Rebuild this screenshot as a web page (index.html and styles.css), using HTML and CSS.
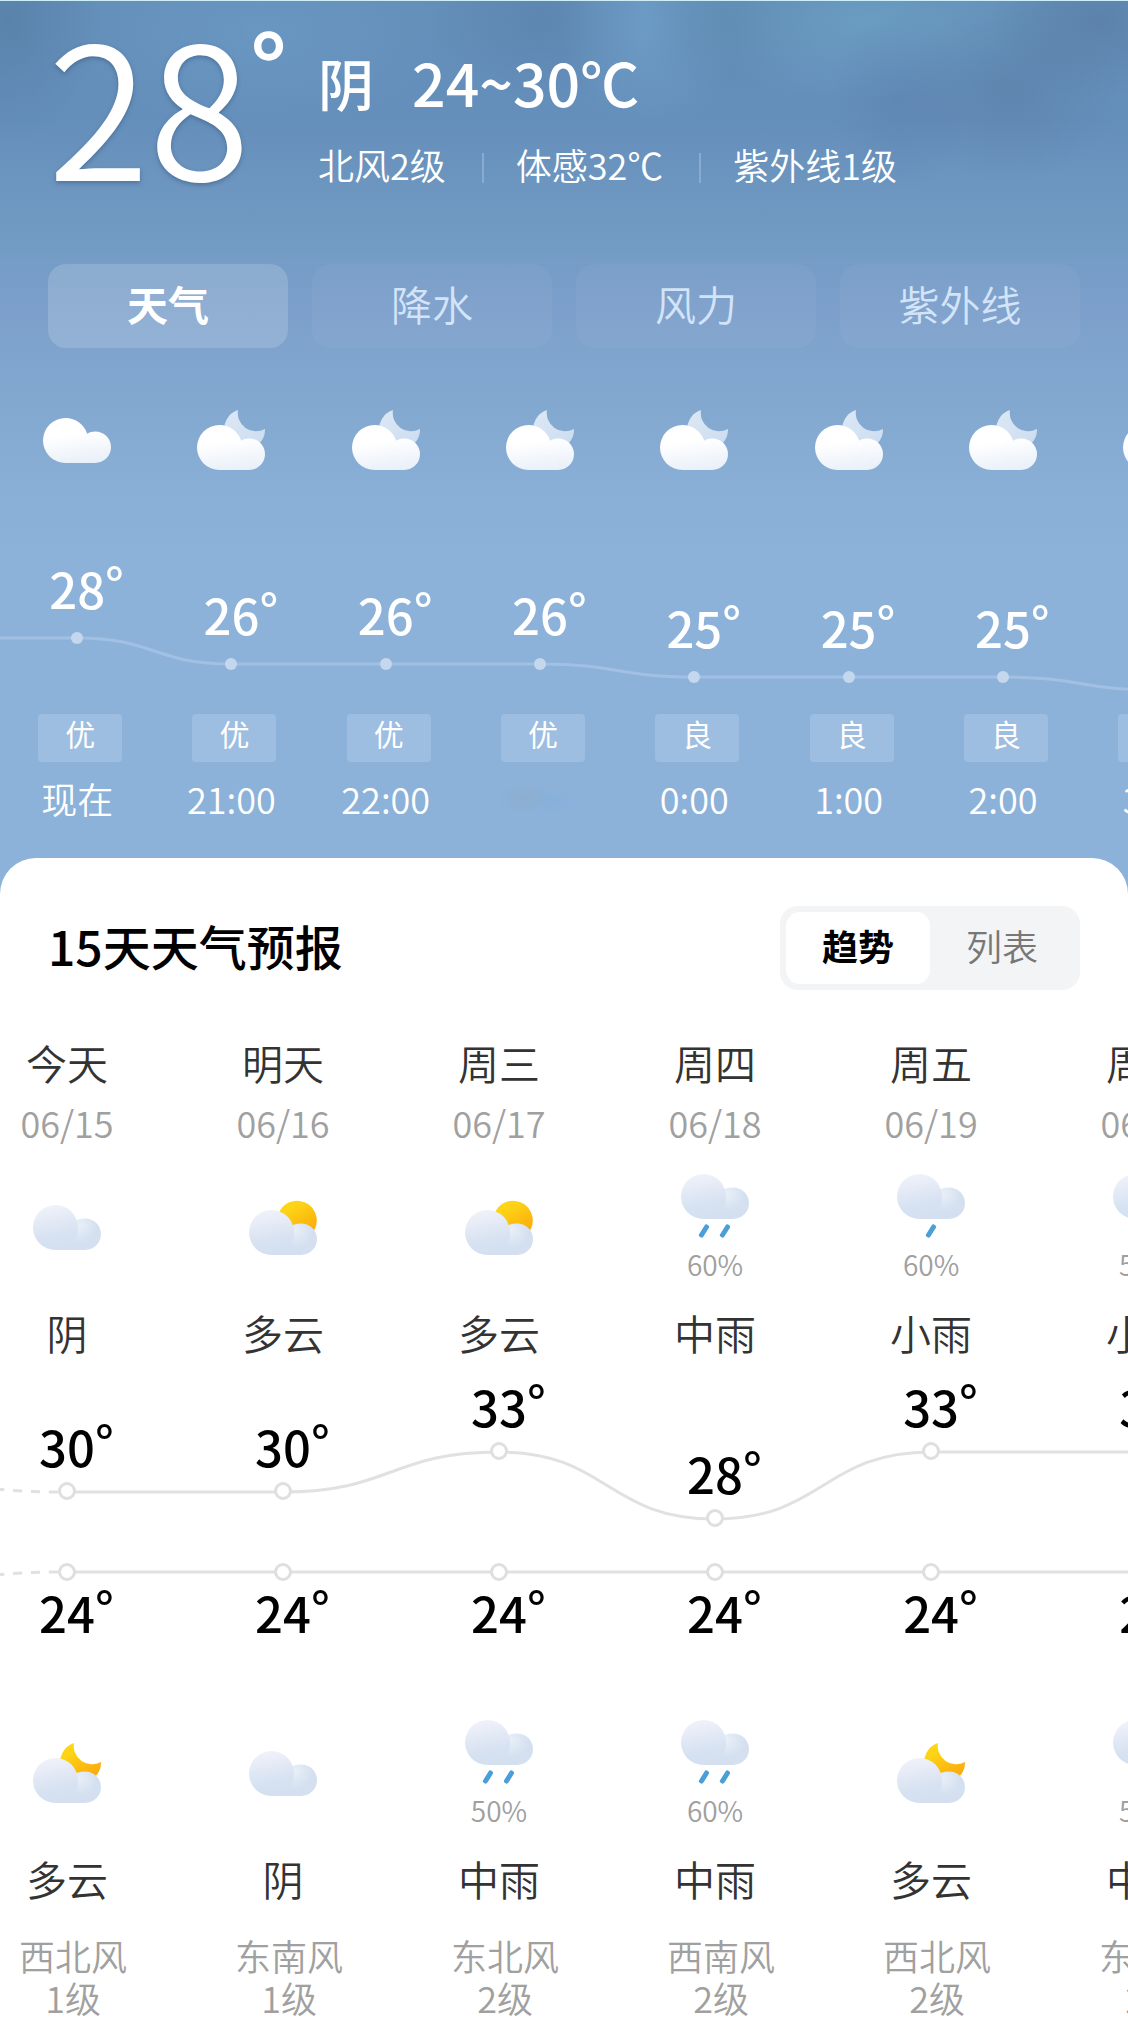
FILE: index.html
```
<!DOCTYPE html>
<html lang="zh-CN">
<head>
  <meta charset="UTF-8">
  <meta name="viewport" content="width=device-width, initial-scale=1">
  <title>天气预报</title>
  <link rel="stylesheet" href="styles.css">
</head>
<body>

  <!-- Icon set -->
  <svg class="icon-defs" width="0" height="0" aria-hidden="true">
    <defs>
      <linearGradient id="white-cloud" x1="0.4" y1="0" x2="0.6" y2="1">
        <stop offset="0.35" stop-color="#ffffff"/>
        <stop offset="1" stop-color="#e9f0f9"/>
      </linearGradient>
      <linearGradient id="pale-moon" x1="0" y1="0" x2="1" y2="1">
        <stop offset="0" stop-color="#dce8f5"/>
        <stop offset="1" stop-color="#cbdcf0"/>
      </linearGradient>
      <linearGradient id="big-puff" x1="0.4" y1="0" x2="0.6" y2="1">
        <stop offset="0" stop-color="#f0f2fa"/>
        <stop offset="0.7" stop-color="#d6e1f1"/>
        <stop offset="1" stop-color="#d4e0f0"/>
      </linearGradient>
      <radialGradient id="small-puff" gradientUnits="userSpaceOnUse" cx="46" cy="20" r="18">
        <stop offset="0" stop-color="#e8eff8"/>
        <stop offset="1" stop-color="#d4e0f0"/>
      </radialGradient>
      <linearGradient id="gold" x1="0.2" y1="0" x2="0.8" y2="1">
        <stop offset="0.2" stop-color="#fdd416"/>
        <stop offset="0.9" stop-color="#fba90c"/>
      </linearGradient>
      <g id="cloud-white">
        <path fill="url(#white-cloud)" d="M22.5 0C32.5 0 41.5 6.5 44.2 15.8C46.5 14.2 49.2 13.4 52.2 13.4A15.8 15.8 0 0 1 52.2 45H22.5A22.5 22.5 0 0 1 22.5 0Z"/>
      </g>
      <g id="cloud-blue">
        <path fill="url(#small-puff)" d="M22 45V30L40 17C43 14.8 47 13.4 52.2 13.4A15.8 15.8 0 0 1 52.2 45Z"/>
        <path fill="url(#big-puff)" d="M22.5 0A22.5 22.5 0 0 1 45 22.5C45 34 38 45 31 45H22.5A22.5 22.5 0 0 1 22.5 0Z"/>
      </g>
      <path id="moon" d="M41-15A20.5 20.5 0 1 0 68 4A18.3 18.3 0 0 1 41-15Z"/>
      <path id="drop" d="M25.5 53L20.5 61" stroke="#4a9fd8" stroke-width="5" stroke-linecap="round"/>
    </defs>
    <symbol id="overcast-white" viewBox="0 0 68 45"><use href="#cloud-white"/></symbol>
    <symbol id="cloudy-night-white" viewBox="0 -15 68 60">
      <use href="#moon" fill="url(#pale-moon)"/>
      <use href="#cloud-white"/>
    </symbol>
    <symbol id="overcast" viewBox="0 0 68 45"><use href="#cloud-blue"/></symbol>
    <symbol id="cloudy-day" viewBox="0 -10 68 55">
      <circle cx="48" cy="10.5" r="19.8" fill="url(#gold)"/>
      <use href="#cloud-blue"/>
    </symbol>
    <symbol id="cloudy-night" viewBox="0 -15 68 60">
      <use href="#moon" fill="url(#gold)"/>
      <use href="#cloud-blue"/>
    </symbol>
    <symbol id="light-rain" viewBox="0 0 68 64">
      <use href="#cloud-blue"/>
      <use href="#drop" x="11"/>
    </symbol>
    <symbol id="rain" viewBox="0 0 68 64">
      <use href="#cloud-blue"/>
      <use href="#drop"/>
      <use href="#drop" x="21"/>
    </symbol>
  </svg>

  <main class="page">

    <header class="now">
      <div class="now-temp">28<span class="now-deg">°</span></div>
      <div class="now-info">
        <h1 class="now-title"><span>阴</span><span class="now-range">24~30℃</span></h1>
        <ul class="now-details">
          <li>北风2级</li>
          <li>体感32℃</li>
          <li>紫外线1级</li>
        </ul>
      </div>
    </header>

    <nav class="tabs">
      <button type="button" class="tab active">天气</button>
      <button type="button" class="tab">降水</button>
      <button type="button" class="tab">风力</button>
      <button type="button" class="tab">紫外线</button>
    </nav>

    <!-- Hourly forecast -->
    <section class="hourly">
      <svg class="hourly-line" viewBox="0 0 1232 226" preserveAspectRatio="none" aria-hidden="true">
        <path d="M0 150H77C154 150 154 176 231 176H539C616 176 616 189 693 189H1001C1078 189 1078 202 1155 202"/>
      </svg>
      <ol class="hours">
        <li class="hour">
          <div class="hour-icon"><svg class="icon icon-cloud"><use href="#overcast-white"/></svg></div>
          <div class="hour-chart" style="--drop: 0px"><span class="temp">28<span class="deg">°</span></span><i class="hour-dot"></i></div>
          <span class="air">优</span>
          <time class="hour-time">现在</time>
        </li>
        <li class="hour">
          <div class="hour-icon"><svg class="icon icon-night"><use href="#cloudy-night-white"/></svg></div>
          <div class="hour-chart" style="--drop: 26px"><span class="temp">26<span class="deg">°</span></span><i class="hour-dot"></i></div>
          <span class="air">优</span>
          <time class="hour-time">21:00</time>
        </li>
        <li class="hour">
          <div class="hour-icon"><svg class="icon icon-night"><use href="#cloudy-night-white"/></svg></div>
          <div class="hour-chart" style="--drop: 26px"><span class="temp">26<span class="deg">°</span></span><i class="hour-dot"></i></div>
          <span class="air">优</span>
          <time class="hour-time">22:00</time>
        </li>
        <li class="hour">
          <div class="hour-icon"><svg class="icon icon-night"><use href="#cloudy-night-white"/></svg></div>
          <div class="hour-chart" style="--drop: 26px"><span class="temp">26<span class="deg">°</span></span><i class="hour-dot"></i></div>
          <span class="air">优</span>
          <span class="hour-time hour-smudge"></span>
        </li>
        <li class="hour">
          <div class="hour-icon"><svg class="icon icon-night"><use href="#cloudy-night-white"/></svg></div>
          <div class="hour-chart" style="--drop: 39px"><span class="temp">25<span class="deg">°</span></span><i class="hour-dot"></i></div>
          <span class="air">良</span>
          <time class="hour-time">0:00</time>
        </li>
        <li class="hour">
          <div class="hour-icon"><svg class="icon icon-night"><use href="#cloudy-night-white"/></svg></div>
          <div class="hour-chart" style="--drop: 39px"><span class="temp">25<span class="deg">°</span></span><i class="hour-dot"></i></div>
          <span class="air">良</span>
          <time class="hour-time">1:00</time>
        </li>
        <li class="hour">
          <div class="hour-icon"><svg class="icon icon-night"><use href="#cloudy-night-white"/></svg></div>
          <div class="hour-chart" style="--drop: 39px"><span class="temp">25<span class="deg">°</span></span><i class="hour-dot"></i></div>
          <span class="air">良</span>
          <time class="hour-time">2:00</time>
        </li>
        <li class="hour">
          <div class="hour-icon"><svg class="icon icon-night"><use href="#cloudy-night-white"/></svg></div>
          <div class="hour-chart" style="--drop: 52px"><span class="temp">24<span class="deg">°</span></span><i class="hour-dot"></i></div>
          <span class="air">良</span>
          <time class="hour-time">3:00</time>
        </li>
      </ol>
    </section>

    <!-- 15 day forecast -->
    <section class="card">
      <div class="card-head">
        <h2 class="card-title">15天天气预报</h2>
        <div class="switch">
          <button type="button" class="switch-btn active">趋势</button>
          <button type="button" class="switch-btn">列表</button>
        </div>
      </div>

      <div class="daily">
        <svg class="daily-line" viewBox="0 0 1296 276" preserveAspectRatio="none" aria-hidden="true">
          <path class="dashed" d="M99 132C76 132 60 131 36 129"/>
          <path d="M108 132H324C432 132 432 92 540 92S648 159 756 159S864 92 972 92H1296"/>
          <path class="dashed" d="M99 212C76 212 60 213 36 215"/>
          <path d="M108 212H1296"/>
        </svg>
        <ol class="days">
          <li class="day">
            <span class="day-name">今天</span>
            <time class="day-date">06/15</time>
            <div class="sky"><svg class="icon icon-cloud"><use href="#overcast"/></svg></div>
            <span class="sky-text">阴</span>
            <div class="day-chart" style="--drop: 40px">
              <span class="temp">30<span class="deg">°</span></span><i class="day-dot"></i>
              <i class="day-dot low"></i><span class="temp">24<span class="deg">°</span></span>
            </div>
            <div class="sky"><svg class="icon icon-night"><use href="#cloudy-night"/></svg></div>
            <span class="sky-text">多云</span>
            <span class="wind">西北风<br>1级</span>
          </li>
          <li class="day">
            <span class="day-name">明天</span>
            <time class="day-date">06/16</time>
            <div class="sky"><svg class="icon icon-day"><use href="#cloudy-day"/></svg></div>
            <span class="sky-text">多云</span>
            <div class="day-chart" style="--drop: 40px">
              <span class="temp">30<span class="deg">°</span></span><i class="day-dot"></i>
              <i class="day-dot low"></i><span class="temp">24<span class="deg">°</span></span>
            </div>
            <div class="sky"><svg class="icon icon-cloud"><use href="#overcast"/></svg></div>
            <span class="sky-text">阴</span>
            <span class="wind">东南风<br>1级</span>
          </li>
          <li class="day">
            <span class="day-name">周三</span>
            <time class="day-date">06/17</time>
            <div class="sky"><svg class="icon icon-day"><use href="#cloudy-day"/></svg></div>
            <span class="sky-text">多云</span>
            <div class="day-chart" style="--drop: 0px">
              <span class="temp">33<span class="deg">°</span></span><i class="day-dot"></i>
              <i class="day-dot low"></i><span class="temp">24<span class="deg">°</span></span>
            </div>
            <div class="sky"><svg class="icon icon-rain"><use href="#rain"/></svg><span class="chance">50%</span></div>
            <span class="sky-text">中雨</span>
            <span class="wind">东北风<br>2级</span>
          </li>
          <li class="day">
            <span class="day-name">周四</span>
            <time class="day-date">06/18</time>
            <div class="sky"><svg class="icon icon-rain"><use href="#rain"/></svg><span class="chance">60%</span></div>
            <span class="sky-text">中雨</span>
            <div class="day-chart" style="--drop: 67px">
              <span class="temp">28<span class="deg">°</span></span><i class="day-dot"></i>
              <i class="day-dot low"></i><span class="temp">24<span class="deg">°</span></span>
            </div>
            <div class="sky"><svg class="icon icon-rain"><use href="#rain"/></svg><span class="chance">60%</span></div>
            <span class="sky-text">中雨</span>
            <span class="wind">西南风<br>2级</span>
          </li>
          <li class="day">
            <span class="day-name">周五</span>
            <time class="day-date">06/19</time>
            <div class="sky"><svg class="icon icon-rain"><use href="#light-rain"/></svg><span class="chance">60%</span></div>
            <span class="sky-text">小雨</span>
            <div class="day-chart" style="--drop: 0px">
              <span class="temp">33<span class="deg">°</span></span><i class="day-dot"></i>
              <i class="day-dot low"></i><span class="temp">24<span class="deg">°</span></span>
            </div>
            <div class="sky"><svg class="icon icon-night"><use href="#cloudy-night"/></svg></div>
            <span class="sky-text">多云</span>
            <span class="wind">西北风<br>2级</span>
          </li>
          <li class="day">
            <span class="day-name">周六</span>
            <time class="day-date">06/20</time>
            <div class="sky"><svg class="icon icon-rain"><use href="#light-rain"/></svg><span class="chance">50%</span></div>
            <span class="sky-text">小雨</span>
            <div class="day-chart" style="--drop: 0px">
              <span class="temp">33<span class="deg">°</span></span><i class="day-dot"></i>
              <i class="day-dot low"></i><span class="temp">24<span class="deg">°</span></span>
            </div>
            <div class="sky"><svg class="icon icon-rain"><use href="#rain"/></svg><span class="chance">50%</span></div>
            <span class="sky-text">中雨</span>
            <span class="wind">东北风<br>2级</span>
          </li>
        </ol>
      </div>
    </section>

  </main>

</body>
</html>
```
FILE: styles.css
```
* {
  box-sizing: border-box;
}

body {
  margin: 0;
  font-family: "Noto Sans CJK SC", "Noto Sans", sans-serif;
  font-weight: 350;
  color: #fff;
  background: #fff;
}

h1, h2, ol, ul {
  margin: 0;
  padding: 0;
  list-style: none;
}

h1, h2 {
  font-weight: 500;
}

button {
  border: 0;
  padding: 0;
  font-family: inherit;
  font-weight: 350;
  background: none;
  cursor: pointer;
}

.icon-defs {
  position: absolute;
}

.page {
  overflow: hidden;
  border-top: 1px solid #cdeef6;
  /* cloudy sky at the top, plain blue below */
  background:
    radial-gradient(ellipse 110px 90px at 1010px 90px, rgba(84, 118, 156, 0.4), transparent),
    radial-gradient(ellipse 110px 80px at 1100px 20px, rgba(84, 118, 156, 0.5), transparent),
    radial-gradient(ellipse 70px 90px at 900px 100px, rgba(88, 122, 168, 0.35), transparent),
    radial-gradient(ellipse 190px 80px at 870px 20px, rgba(112, 168, 200, 0.5), transparent),
    radial-gradient(ellipse 90px 80px at 730px 20px, rgba(88, 132, 168, 0.5), transparent),
    radial-gradient(ellipse 90px 110px at 650px 20px, rgba(114, 164, 206, 0.6), transparent),
    radial-gradient(ellipse 110px 80px at 540px 20px, rgba(86, 124, 166, 0.5), transparent),
    radial-gradient(ellipse 180px 100px at 260px 30px, rgba(110, 158, 202, 0.5), transparent),
    radial-gradient(ellipse 90px 120px at 10px 20px, rgba(80, 118, 158, 0.5), transparent),
    linear-gradient(#648fb9 0, #658fbb 120px, #6f98c1 210px, #739cc5 250px, #7b9fca 300px, #83a8d0 400px, #8aafd7 490px, #8cb2d9 560px);
}

/* Current weather */
.now {
  display: flex;
  gap: 68px;
  height: 263px;
  padding: 20px 48px 0;
}

.now-temp {
  font-size: 184px;
  font-weight: 350;
  line-height: 160px;
  text-shadow: 0 2px 4px rgba(50, 80, 120, 0.5);
  white-space: nowrap;
}

.now-deg {
  display: inline-block;
  width: 0;
  font-size: 92px;
  font-weight: 700;
  line-height: 40px;
  vertical-align: 78px;
  text-shadow: none;
}

.now-info {
  padding-top: 21px;
}

.now-title {
  display: flex;
  gap: 38px;
  font-size: 56px;
  line-height: 80px;
}

.now-range {
  font-size: 59px;
}

.now-details {
  display: flex;
  margin-top: 18px;
  font-size: 36px;
  line-height: 48px;
}

.now-details li + li::before {
  content: "";
  display: inline-block;
  width: 2px;
  height: 30px;
  margin: 0 32px 0 36px;
  vertical-align: -3px;
  background: #88abd0;
}

/* Tabs */
.tabs {
  display: grid;
  grid-template-columns: repeat(4, 1fr);
  gap: 24px;
  padding: 0 48px;
}

.tab {
  height: 84px;
  padding-bottom: 6px;
  border-radius: 18px;
  font-size: 41px;
  color: #d3e4f8;
  background: rgba(255, 255, 255, 0.04);
}

.tab.active {
  font-weight: 700;
  color: #fff;
  background: rgba(255, 255, 255, 0.16);
}

/* Shared bits */
.icon {
  display: block;
  flex: none;
  width: 68px;
}

.icon-cloud { height: 45px; }
.icon-day { height: 55px; }
.icon-night { height: 60px; }
.icon-rain { height: 64px; }

.temp {
  font-size: 49px;
  font-weight: 500;
  line-height: 56px;
}

/* takes no width, so the digits stay centred */
.deg {
  display: inline-block;
  width: 0;
  line-height: 40px;
  vertical-align: 5px;
}

/* Hourly forecast */
.hourly {
  position: relative;
  padding: 44px 0 36px;
}

.hourly-line {
  position: absolute;
  top: 140px;
  left: 0;
  width: 109.44%;
  height: 226px;
  fill: none;
  stroke: #a1c0e4;
  stroke-width: 3;
}

.hours {
  position: relative;
  display: grid;
  grid-auto-flow: column;
  grid-auto-columns: 13.68%;
}

.hour {
  display: flex;
  flex-direction: column;
  align-items: center;
}

.hour-icon {
  display: flex;
  align-items: center;
  height: 96px;
}

.hour-chart {
  display: flex;
  flex-direction: column;
  align-items: center;
  height: 226px;
  padding-top: calc(72px + var(--drop));
}

.hour-dot {
  width: 12px;
  height: 12px;
  margin-top: 16px;
  border-radius: 50%;
  background: #c4d7ed;
}

.air {
  width: 84px;
  height: 48px;
  margin-left: 6px;
  border-radius: 4px;
  font-size: 30px;
  font-weight: 400;
  line-height: 38px;
  text-align: center;
  background: #9dbde1;
}

.hour-time {
  height: 48px;
  margin-top: 12px;
  font-size: 36px;
  line-height: 48px;
}

.hour-smudge {
  width: 84px;
  background:
    radial-gradient(ellipse 30px 16px at 26px 24px, rgba(140, 172, 204, 0.7), transparent),
    radial-gradient(ellipse 24px 14px at 58px 28px, rgba(128, 174, 222, 0.5), transparent);
}

/* 15 day forecast */
.card {
  padding: 48px 0 24px;
  border-radius: 36px 36px 0 0;
  color: #333;
  background: #fff;
}

.card-head {
  display: flex;
  align-items: center;
  justify-content: space-between;
  padding: 0 48px;
}

.card-title {
  font-size: 48px;
  line-height: 72px;
  padding-bottom: 6px;
  color: #000;
}

.switch {
  display: flex;
  width: 300px;
  height: 84px;
  padding: 6px;
  border-radius: 18px;
  background: #f3f4f6;
}

.switch-btn {
  flex: 1;
  padding-bottom: 6px;
  border-radius: 14px;
  font-size: 36px;
  color: #777;
}

.switch-btn.active {
  font-weight: 700;
  color: #000;
  background: #fff;
}

/* the list is scrolled a little to the left */
.daily {
  position: relative;
  margin: 44px 0 0 -41px;
}

.daily-line {
  position: absolute;
  top: 326px;
  left: 0;
  width: 110.88%;
  height: 276px;
  fill: none;
  stroke: #e1e1e4;
  stroke-width: 3;
}

.dashed {
  stroke-dasharray: 9 9;
}

.days {
  position: relative;
  display: grid;
  grid-auto-flow: column;
  grid-auto-columns: 18.48%;
}

.day {
  display: flex;
  flex-direction: column;
  align-items: center;
}

.day-name,
.sky-text {
  font-size: 41px;
  line-height: 56px;
}

.day-date {
  margin: 8px 0 28px;
  font-size: 36px;
  line-height: 48px;
  color: #a0a0a0;
}

.sky {
  display: flex;
  flex-direction: column;
  align-items: center;
  justify-content: center;
  gap: 10px;
  height: 106px;
  margin-bottom: 24px;
}

.chance {
  font-size: 28px;
  line-height: 32px;
  color: #a0a0a0;
}

.day-chart {
  display: flex;
  flex-direction: column;
  align-items: center;
  height: 280px;
  margin-bottom: 80px;
  padding-top: calc(18px + var(--drop));
  color: #000;
}

.day-dot {
  width: 18px;
  height: 18px;
  margin-top: 8px;
  border: 3px solid #dfdfe2;
  border-radius: 50%;
  background: #fff;
}

.day-dot.low {
  margin: auto 0 3px;
}

.wind {
  margin: 28px 0 0 12px;
  font-size: 36px;
  line-height: 42px;
  text-align: center;
  color: #a0a0a0;
}
```
